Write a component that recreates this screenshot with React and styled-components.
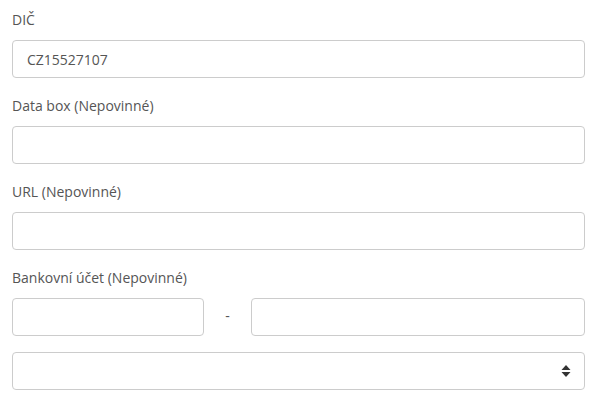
import React from "react";
import styled, { createGlobalStyle } from "styled-components";

const Global = createGlobalStyle`
  html, body { margin: 0; padding: 0; background: #fff; }
  body { font-family: "Open Sans", "Liberation Sans", sans-serif; font-size: 14px; color: #555; }
  * { box-sizing: border-box; }
`;

const Form = styled.form`
  display: flex;
  flex-direction: column;
  gap: 18px;
  padding: 10px 23px 0 12px;
`;

const Group = styled.div`
  display: flex;
  flex-direction: column;
  gap: 10px;
`;

const Label = styled.label`
  font-size: 14px;
  line-height: 20px;
  color: #555;
`;

const Input = styled.input`
  display: block;
  width: 100%;
  height: 38px;
  padding: 0 14px;
  border: 1px solid #ccc;
  border-radius: 4px;
  font-family: inherit;
  font-size: 14px;
  color: #555;
  background: #fff;
  outline: none;
`;

const BankRow = styled.div`
  display: grid;
  grid-template-columns: 192px 47px 1fr;
  align-items: center;
`;

const Dash = styled.span`
  text-align: center;
  color: #555;
  font-size: 14px;
  margin-top: -4px;
`;

const SelectWrap = styled.div`
  position: relative;
  margin-top: -2px;
`;

const Select = styled.select`
  display: block;
  width: 100%;
  height: 38px;
  padding: 0 14px;
  border: 1px solid #ccc;
  border-radius: 4px;
  background: #fff;
  appearance: none;
  font-family: inherit;
  font-size: 14px;
  color: #555;
  outline: none;
`;

const Arrow = styled.svg`
  position: absolute;
  right: 14px;
  top: 50%;
  transform: translateY(-50%);
  pointer-events: none;
`;

export default function App() {
  return (
    <>
      <Global />
      <Form>
        <Group>
          <Label>DIČ</Label>
          <Input defaultValue="CZ15527107" />
        </Group>
        <Group>
          <Label>Data box (Nepovinné)</Label>
          <Input />
        </Group>
        <Group>
          <Label>URL (Nepovinné)</Label>
          <Input />
        </Group>
        <Group>
          <Label>Bankovní účet (Nepovinné)</Label>
          <BankRow>
            <Input />
            <Dash>-</Dash>
            <Input />
          </BankRow>
        </Group>
        <SelectWrap>
          <Select>
            <option></option>
          </Select>
          <Arrow width="10" height="14" viewBox="0 0 10 14">
            <path d="M5 1 L9.5 6 L0.5 6 Z" fill="#333" />
            <path d="M5 13 L9.5 8 L0.5 8 Z" fill="#333" />
          </Arrow>
        </SelectWrap>
      </Form>
    </>
  );
}
